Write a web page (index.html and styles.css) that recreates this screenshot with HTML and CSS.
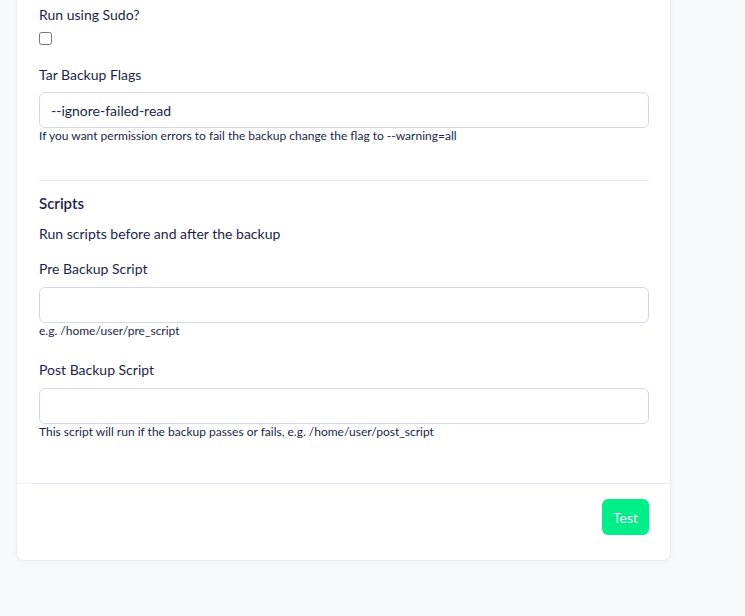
FILE: index.html
```html
<!DOCTYPE html>
<html lang="en">
<head>
<meta charset="UTF-8">
<title>Backup Settings</title>
<link rel="stylesheet" href="styles.css">
</head>
<body>
<div class="card">
    <div class="card-body">
        <div class="form-group form-group-check">
            <label class="label" for="sudo">Run using Sudo?</label>
            <input type="checkbox" id="sudo" class="check">
        </div>

        <div class="form-group form-group-tar">
            <label class="label" for="tarFlags">Tar Backup Flags</label>
            <input type="text" id="tarFlags" class="input" value="--ignore-failed-read">
            <div class="help">If you want permission errors to fail the backup change the flag to --warning=all</div>
        </div>

        <hr class="divider">

        <h3 class="section-title">Scripts</h3>
        <p class="section-desc">Run scripts before and after the backup</p>

        <div class="form-group">
            <label class="label" for="preScript">Pre Backup Script</label>
            <input type="text" id="preScript" class="input">
            <div class="help">e.g. /home/user/pre_script</div>
        </div>

        <div class="form-group">
            <label class="label" for="postScript">Post Backup Script</label>
            <input type="text" id="postScript" class="input">
            <div class="help">This script will run if the backup passes or fails, e.g. /home/user/post_script</div>
        </div>
    </div>

    <div class="card-footer">
        <button class="btn-test">Test</button>
    </div>
</div>
</body>
</html>
```

FILE: styles.css
```css
body, html {
    margin: 0;
    padding: 0;
    background-color: #f8f9fc;
    font-family: Lato, "Noto Sans", sans-serif;
    color: #211f4a;
    height: 100%;
    overflow: hidden;
}
.card {
    width: 653px;
    margin: -32px 0 0 16px;
    background: #fff;
    border: 1px solid #ececf6;
    border-radius: 8px;
    box-shadow: 0 2px 6px rgba(40, 40, 90, 0.04);
}
.card-body {
    padding: 35px 21px 23px 22px;
}
.form-group {
    margin-bottom: 20px;
}
.label {
    display: block;
    font-size: 14px;
    line-height: 21px;
    margin-bottom: 8px;
}
.form-group-check {
    margin-bottom: 19px;
}
.form-group-check .label,
.form-group-tar .label {
    margin-bottom: 7px;
}
.check {
    display: block;
    width: 13px;
    height: 13px;
    margin: 0;
    accent-color: #9aa0b8;
}
.input {
    display: block;
    width: 100%;
    height: 36px;
    box-sizing: border-box;
    border: 1px solid #d3d8ec;
    border-radius: 6px;
    padding: 0 11px;
    font-family: inherit;
    font-size: 14px;
    color: #211f4a;
}
.help {
    font-size: 12px;
    line-height: 16px;
    margin-top: 0;
}
.divider {
    border: 0;
    border-top: 1px solid #e6e6f2;
    margin: 36px 0 12px;
}
.section-title {
    font-size: 15px;
    font-weight: 600;
    line-height: 21px;
    margin: 0 0 9px;
}
.section-desc {
    font-size: 14px;
    line-height: 21px;
    margin: 0 0 14px;
}
.card-footer {
    border-top: 1px solid #ececf6;
    padding: 15px 21px 25px;
    display: flex;
    justify-content: flex-end;
}
.btn-test {
    background-color: #00ee88;
    color: #fff;
    border: 0;
    border-radius: 6px;
    height: 36px;
    padding: 0 11px;
    font-family: inherit;
    font-size: 14px;
    cursor: pointer;
}
```
